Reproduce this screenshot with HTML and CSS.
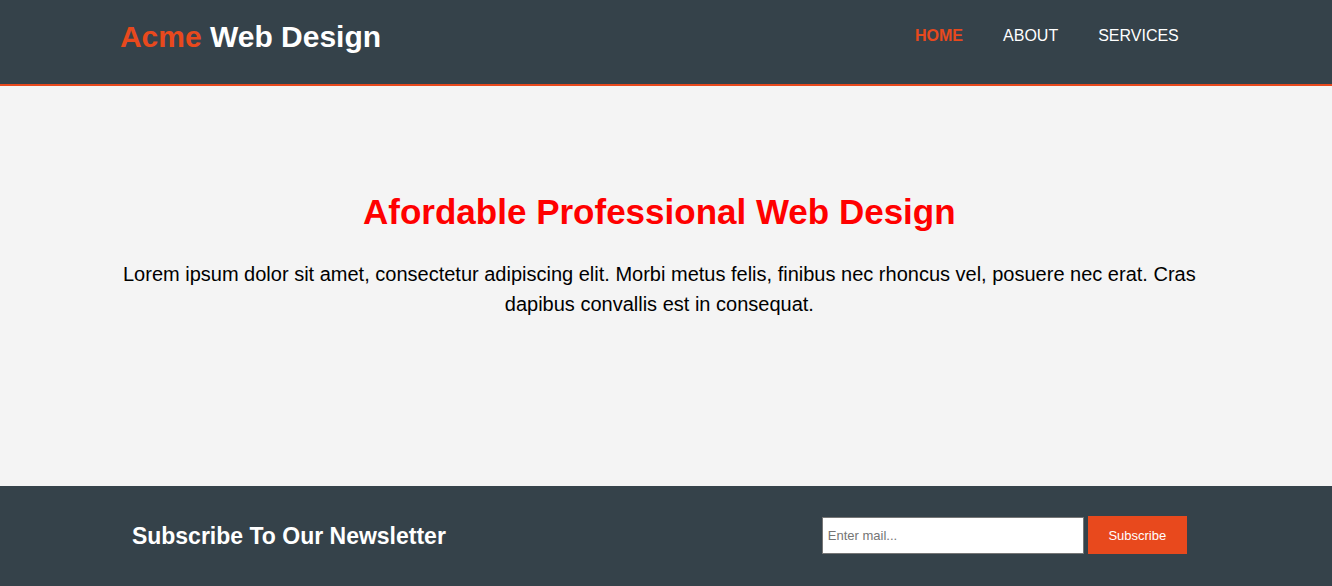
FILE: index.html
```html
<!DOCTYPE html>
<html lang="en">
<head>
<meta charset="utf-8">
<meta name="viewport" content="width=device-width, initial-scale=1">
<title>Acme Web Design</title>
<link rel="stylesheet" href="styles.css">
</head>
<body>
<header class="site-header">
  <div class="container header-row">
    <h1 class="brand"><span class="highlight">Acme</span> Web Design</h1>
    <nav class="main-nav">
      <a class="nav-link current" href="#">Home</a>
      <a class="nav-link" href="#">About</a>
      <a class="nav-link" href="#">Services</a>
    </nav>
  </div>
</header>
<section class="showcase">
  <div class="container">
    <h2 class="showcase-title">Afordable Professional Web Design</h2>
    <p class="showcase-text">Lorem ipsum dolor sit amet, consectetur adipiscing elit. Morbi metus felis, finibus nec rhoncus vel, posuere nec erat. Cras dapibus convallis est in consequat.</p>
  </div>
</section>
<section class="newsletter">
  <div class="container newsletter-row">
    <h2 class="newsletter-title">Subscribe To Our Newsletter</h2>
    <form class="newsletter-form">
      <input class="email" type="email" placeholder="Enter mail..." aria-label="Email">
      <button class="subscribe" type="submit">Subscribe</button>
    </form>
  </div>
</section>
</body>
</html>
```
FILE: styles.css
```css
* {
  box-sizing: border-box;
}

body {
  margin: 0;
  background: #f4f4f4;
  color: #000;
  font: 16px/24px "Liberation Sans", Arial, sans-serif;
}

h1,
h2,
p {
  margin: 0;
}

.container {
  width: 81%;
  margin-left: 9%;
}

.site-header {
  background: #35424a;
  border-bottom: 2px solid #e8491d;
  color: #fff;
}

.header-row {
  display: flex;
  justify-content: space-between;
  padding: 12px 0 22px;
}

.brand {
  font-size: 30px;
  line-height: 50px;
}

.highlight {
  color: #e8491d;
}

.main-nav {
  display: flex;
  gap: 40px;
  padding: 12px 20px 0 0;
}

.nav-link {
  color: #fff;
  text-decoration: none;
  text-transform: uppercase;
}

.current {
  color: #e8491d;
  font-weight: bold;
}

.showcase {
  min-height: 400px;
  padding-top: 100px;
  text-align: center;
}

.showcase-title {
  color: #f00;
  font-size: 35px;
  line-height: 51px;
}

.showcase-text {
  margin-top: 22px;
  font-size: 20px;
  line-height: 30px;
}

.newsletter {
  background: #35424a;
  color: #fff;
}

.newsletter-row {
  display: flex;
  align-items: flex-start;
  justify-content: space-between;
  padding: 30px 12px;
}

.newsletter-title {
  font-size: 23px;
  line-height: 40px;
}

.newsletter-form {
  display: flex;
  align-items: flex-end;
  gap: 4px;
}

.email {
  width: 262px;
  height: 37px;
  padding: 4px 5px;
  border: 1px solid #767676;
  background: #fff;
  font: 13px "Liberation Sans", Arial, sans-serif;
}

.subscribe {
  min-width: 99px;
  height: 38px;
  padding: 0 20px;
  border: 0;
  background: #e8491d;
  color: #fff;
  font: 13px "Liberation Sans", Arial, sans-serif;
}
```
